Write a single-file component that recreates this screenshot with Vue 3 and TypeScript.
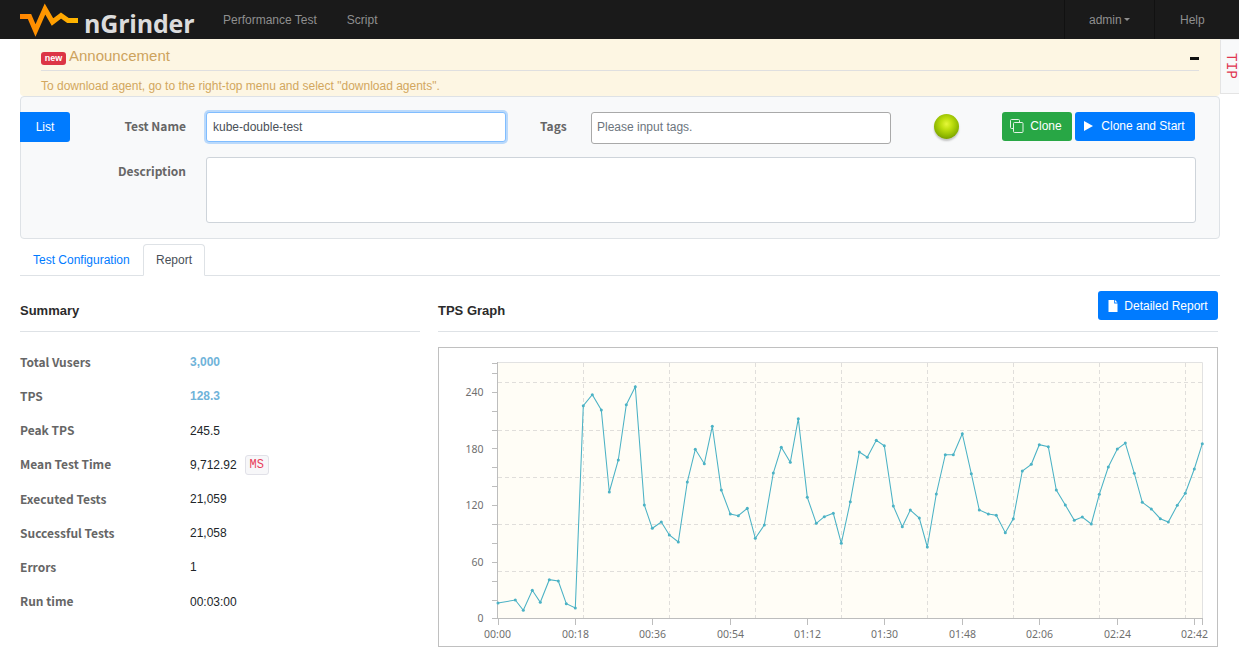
<script setup lang="ts">
const points: [number, number][] = [
  [498,603],[515.3,600],[523.3,610.3],[532.3,590.3],[540.3,602.3],[549.3,579.7],[558.3,581],[566.3,603.7],[575.3,608],
  [583.3,405.7],[592.3,394.7],[601.3,410],[609.3,492],[618.3,460],[626.3,404.7],[635.3,386.7],[644.3,505],[652.3,528.3],
  [661.3,522],[669.3,535],[678.3,542],[687.3,482],[695.3,449.3],[704.3,463.7],[712.3,426.3],[721.3,490],[730.3,514],
  [738.3,515.7],[747.3,508.3],[755.3,538.3],[764.3,525],[773.3,473],[781.3,447.3],[790.3,462.3],[798.3,418.7],[807.3,497.3],
  [816.3,523.3],[824.3,516.7],[833.3,513.3],[841.3,543.3],[850.3,501.7],[859.3,452],[867.3,457.3],[876.3,440.3],[884.3,445.7],
  [893.3,506],[902.3,526.7],[910.3,510],[919.3,518],[927.3,547],[936.3,494],[945.3,454.7],[953.3,454.7],[962.3,433.7],
  [971.3,473.7],[979.3,510],[988.3,514],[996.3,515.3],[1005.3,532.7],[1013.3,518.7],[1022.3,471],[1031.3,464.3],[1039.3,444.7],
  [1048.3,446.7],[1056.3,490],[1065.3,505],[1074.3,520.3],[1082.3,517],[1091.3,524],[1099.3,494.3],[1108.3,467],[1117.3,449],
  [1125.3,443],[1134.3,473.3],[1142.3,502.3],[1151.3,509],[1160.3,518.7],[1168.3,522],[1177.3,505.3],[1185.3,493.3],[1194.3,469],[1202.3,443.7]
]
const linePoints = points.map(p => p.join(',')).join(' ')
const gridH = [382.5, 430.5, 477.5, 524.5, 571.5]
const gridV = [583.5, 669.5, 755.5, 841.5, 927.5, 1013.5, 1099.5, 1185.5]
const yTicks = [363.5, 373.5, 392.5, 411.5, 430.5, 448.5, 467.5, 486.5, 505.5, 524.5, 543.5, 562.5, 581.5, 600.5, 618.5]
const yLabels = [
  { t: '240', y: 396 }, { t: '180', y: 453 }, { t: '120', y: 509 }, { t: '60', y: 566 }, { t: '0', y: 622 }
]
const xTicks = [498.5, 575.5, 652.5, 730.5, 807.5, 884.5, 962.5, 1039.5, 1117.5, 1194.5, 1202.5]
const xLabels = [
  { t: '00:00', x: 497.5 }, { t: '00:18', x: 575.5 }, { t: '00:36', x: 652.5 }, { t: '00:54', x: 730.5 },
  { t: '01:12', x: 807.5 }, { t: '01:30', x: 884.5 }, { t: '01:48', x: 962.5 }, { t: '02:06', x: 1039.5 },
  { t: '02:24', x: 1117.5 }, { t: '02:42', x: 1194.5 }
]
const rows = [
  { label: 'Total Vusers', value: '3,000', hi: true },
  { label: 'TPS', value: '128.3', hi: true },
  { label: 'Peak TPS', value: '245.5' },
  { label: 'Mean Test Time', value: '9,712.92', unit: 'MS' },
  { label: 'Executed Tests', value: '21,059' },
  { label: 'Successful Tests', value: '21,058' },
  { label: 'Errors', value: '1' },
  { label: 'Run time', value: '00:03:00' }
]
</script>

<template>
  <div class="page">
    <header class="navbar">
      <a class="brand">
        <svg class="logo" width="60" height="39" viewBox="20 0 60 39">
          <defs>
            <linearGradient id="pulse" x1="0" y1="0" x2="1" y2="0">
              <stop offset="0" stop-color="#ff8400" />
              <stop offset="0.5" stop-color="#ff9a00" />
              <stop offset="1" stop-color="#ffb800" />
            </linearGradient>
          </defs>
          <polyline points="20,16.5 29.5,16.5 35.5,30.5 45,9 52.5,22 61,15.5 68,20.5 78,20.5" fill="none" stroke="url(#pulse)" stroke-width="5" stroke-linejoin="miter" />
        </svg>
        <span class="brand-text">nGrinder</span>
      </a>
      <nav class="nav-left">
        <span>Performance Test</span>
        <span>Script</span>
      </nav>
      <nav class="nav-right">
        <span class="nav-cell admin">admin<i class="caret"></i></span>
        <span class="nav-cell help">Help</span>
      </nav>
    </header>

    <div class="notice-row">
      <section class="notice">
        <div class="notice-head">
          <span class="badge">new</span>
          <span class="notice-title">Announcement</span>
          <span class="minus"></span>
        </div>
        <p class="notice-body">To download agent, go to the right-top menu and select "download agents".</p>
      </section>
      <aside class="tip"><span>TIP</span></aside>
    </div>

    <section class="panel">
      <div class="form-row first">
        <button class="btn blue list">List</button>
        <label class="lbl name-lbl">Test Name</label>
        <input class="input name" value="kube-double-test" />
        <label class="lbl tags-lbl">Tags</label>
        <input class="input tags" placeholder="Please input tags." />
        <span class="ball"></span>
        <button class="btn green clone">
          <svg width="14" height="14" viewBox="0 0 14 14" fill="none" stroke="#e4f3e7" stroke-width="1">
            <path d="M9.5 3.5V1.5a1 1 0 0 0-1-1H1.5a1 1 0 0 0-1 1v7a1 1 0 0 0 1 1h2" />
            <rect x="3.5" y="3.5" width="9.5" height="10" rx="1" />
          </svg>
          Clone
        </button>
        <button class="btn blue start">
          <svg width="11" height="12" viewBox="0 0 11 12"><path d="M1 1v10l9-5z" fill="#fff" /></svg>
          Clone and Start
        </button>
      </div>
      <div class="form-row second">
        <label class="lbl desc-lbl">Description</label>
        <textarea class="input desc"></textarea>
      </div>
    </section>

    <div class="tabs">
      <a class="tab link">Test Configuration</a>
      <a class="tab active">Report</a>
    </div>

    <main class="report">
      <section class="summary">
        <h4 class="section-head"><span>Summary</span></h4>
        <dl class="stats">
          <div v-for="r in rows" :key="r.label" class="stat">
            <dt>{{ r.label }}</dt>
            <dd :class="{ hi: r.hi }">
              {{ r.value }}<code v-if="r.unit" class="unit">{{ r.unit }}</code>
            </dd>
          </div>
        </dl>
      </section>
      <section class="graph">
        <h4 class="section-head">
          <span>TPS Graph</span>
          <button class="btn blue detail">
            <svg width="10" height="12" viewBox="0 0 10 12"><path d="M0.5 0h5.7v3.4h3.3V12H0.5z M7 0l2.5 2.6H7z" fill="#fff" /></svg>
            Detailed Report
          </button>
        </h4>
        <div class="chart">
          <svg width="778" height="298" viewBox="439 348 778 298">
            <rect x="498" y="362.5" width="704.5" height="256" fill="#fffdf6" />
            <path d="M498 362.5H1202.5V618" fill="none" stroke="#e2e2e2" />
            <g stroke="#e0dedb" stroke-dasharray="4 3" fill="none">
              <line v-for="y in gridH" :key="'h' + y" x1="498" :y1="y" x2="1202" :y2="y" />
              <line v-for="x in gridV" :key="'v' + x" :x1="x" y1="363" :x2="x" y2="618" />
            </g>
            <g stroke="#bdbdbd" fill="none">
              <line x1="497.5" y1="362" x2="497.5" y2="619" />
              <line x1="498" y1="618.5" x2="1203" y2="618.5" />
              <line v-for="y in yTicks" :key="'yt' + y" x1="492" :y1="y" x2="497" :y2="y" />
              <line v-for="x in xTicks" :key="'xt' + x" :x1="x" y1="619" :x2="x" y2="625" />
            </g>
            <polyline :points="linePoints" fill="none" stroke="#4bb2c5" stroke-width="1.05" />
            <circle v-for="(p, i) in points" :key="i" :cx="p[0]" :cy="p[1]" r="1.5" fill="#4bb2c5" />
            <g class="axis-text">
              <text v-for="l in yLabels" :key="l.t" x="483.5" :y="l.y" text-anchor="end">{{ l.t }}</text>
              <text v-for="l in xLabels" :key="l.t" :x="l.x" y="638" text-anchor="middle">{{ l.t }}</text>
            </g>
          </svg>
        </div>
      </section>
    </main>
  </div>
</template>

<style>
html, body { margin: 0; overflow: hidden; background: #fff; }
</style>

<style scoped>
.page {
  width: 1239px;
  height: 654px;
  overflow: hidden;
  font-family: "Liberation Sans", Arial, sans-serif;
  font-size: 12px;
  color: #212529;
}
.navbar {
  height: 39px;
  background: #1a1a1a;
  display: flex;
  align-items: stretch;
  padding-left: 20px;
}
.brand { display: flex; align-items: flex-start; width: 203px; }
.logo { display: block; flex: none; }
.brand-text {
  font-family: "Open Sans", sans-serif;
  font-weight: 700;
  font-size: 25px;
  letter-spacing: -0.2px;
  line-height: 39px;
  margin-left: 4px;
  margin-top: 4px;
  color: #dcdcdc;
  height: 35px;
}
.nav-left {
  display: flex;
  gap: 30px;
  align-items: center;
  color: #8f8f8f;
}
.nav-right {
  margin-left: auto;
  display: flex;
  color: #8f8f8f;
}
.nav-cell {
  display: flex;
  align-items: center;
  border-left: 1px solid #111;
}
.admin { width: 90px; padding-left: 24px; box-sizing: border-box; }
.help { width: 85px; padding-left: 25px; box-sizing: border-box; }
.caret {
  display: inline-block;
  margin-left: 2px;
  border-top: 3px solid #8f8f8f;
  border-left: 3px solid transparent;
  border-right: 3px solid transparent;
}
.notice-row { display: flex; padding-left: 20px; height: 57px; }
.notice {
  width: 1200px;
  box-sizing: border-box;
  background: #fdf6e3;
  border-radius: 0 0 4px 4px;
  padding: 0 21px;
  color: #d2a75e;
}
.notice-head {
  display: flex;
  align-items: center;
  height: 32px;
  border-bottom: 1px solid #dfdfe0;
  padding-top: 2px;
  box-sizing: border-box;
  width: 1158px;
}
.badge {
  background: #dc3545;
  color: #fff;
  font-weight: 700;
  font-size: 9px;
  line-height: 13px;
  height: 13px;
  width: 25px;
  text-align: center;
  border-radius: 3px;
  margin-top: 6px;
}
.notice-title { font-size: 15px; color: #cda35d; margin-left: 3px; }
.minus {
  margin-left: auto;
  width: 9px;
  height: 3px;
  background: #111;
  margin-top: 6px;
}
.notice-body { margin: 8px 0 0; line-height: 14px; white-space: nowrap; }
.tip {
  width: 19px;
  height: 55px;
  box-sizing: border-box;
  background: #f8f9fa;
  border: 1px solid #e4e4e4;
  border-right: 0;
  display: flex;
  justify-content: center;
  padding-top: 13px;
}
.tip span {
  writing-mode: vertical-rl;
  font-family: "Liberation Mono", monospace;
  font-size: 14.4px;
  line-height: 13px;
  color: #e0354f;
}
.panel {
  margin-left: 20px;
  width: 1200px;
  height: 143px;
  box-sizing: border-box;
  background: #f8f9fa;
  border: 1px solid #dee2e6;
  border-radius: 4px;
}
.form-row { display: flex; }
.first { margin-top: 15px; height: 32px; }
.second { margin-top: 13px; }
.btn {
  display: inline-flex;
  align-items: center;
  justify-content: center;
  gap: 6px;
  border: 0;
  border-radius: 3px;
  color: #fff;
  font: 12px "Liberation Sans", Arial, sans-serif;
  height: 29px;
  padding: 0;
}
.blue { background: #007bff; }
.green { background: #28a745; }
.list { width: 50px; height: 30px; margin-left: -1px; border-radius: 0 3px 3px 0; }
.lbl {
  font-family: "Noto Sans CJK KR", "Noto Sans", sans-serif;
  font-weight: 700;
  font-size: 12px;
  color: #666;
  text-align: right;
  line-height: 27px;
}
.name-lbl { width: 116px; margin-right: 20px; }
.tags-lbl { margin-left: 34px; width: 51px; text-align: left; }
.desc-lbl { width: 165px; margin-right: 20px; }
.input {
  box-sizing: border-box;
  font: 12px "Liberation Sans", Arial, sans-serif;
  color: #495057;
  background: #fff;
  border-radius: 3px;
  outline: none;
  padding: 0 6px;
  display: block;
  margin: 0;
}
.name {
  width: 300px;
  height: 30px;
  border: 1px solid #80bdff;
  box-shadow: 0 0 0 2px rgba(0, 123, 255, 0.25);
}
.tags {
  width: 300px;
  height: 32px;
  border: 1px solid #a9a9a9;
  padding: 0 5px 2px;
}
.tags::placeholder { color: #6c757d; opacity: 1; }
.desc {
  width: 990px;
  height: 66px;
  border: 1px solid #ced4da;
  resize: none;
}
.ball {
  width: 25px;
  height: 25px;
  margin: 2px 0 0 43px;
  border-radius: 50%;
  background: radial-gradient(circle at 50% 40%, #e6f73a 0, #c0e010 28%, #8fb800 62%, #6a8a08 88%, #8a9a50 100%);
  box-shadow: 0 2px 2px rgba(0, 0, 0, 0.22);
}
.clone { width: 70px; margin-left: 43px; padding: 0 2px 2px 0; }
.start { width: 120px; margin-left: 3px; gap: 7px; padding: 0 2px 2px 0; }
.tabs {
  margin: 5px 0 0 20px;
  width: 1200px;
  height: 32px;
  box-sizing: border-box;
  border-bottom: 1px solid #dee2e6;
  display: flex;
}
.tab {
  box-sizing: border-box;
  height: 32px;
  line-height: 30px;
  padding: 0 12px;
  border: 1px solid transparent;
}
.link { color: #007bff; width: 123px; }
.active {
  color: #495057;
  background: #fff;
  border-color: #dee2e6 #dee2e6 #fff;
  border-radius: 4px 4px 0 0;
}
.report { display: flex; margin-left: 20px; gap: 18px; }
.summary { width: 400px; }
.graph { width: 780px; }
.section-head {
  margin: 0;
  height: 56px;
  padding-top: 15px;
  box-sizing: border-box;
  border-bottom: 1px solid #dee2e6;
  display: flex;
  justify-content: space-between;
  align-items: flex-start;
  font-size: 13px;
  font-weight: 700;
  color: #2b2b2b;
}
.section-head span { line-height: 39px; }
.detail { width: 120px; }
.stats { margin: 13.2px 0 0; }
.stat { display: flex; height: 34.2px; align-items: center; }
.stat dt {
  width: 170px;
  font-family: "Noto Sans CJK KR", "Noto Sans", sans-serif;
  font-weight: 700;
  font-size: 12px;
  color: #666;
  padding-bottom: 2px;
}
.stat dd { margin: 0; display: flex; align-items: center; color: #212529; }
.stat dd.hi { color: #6fb3d9; font-weight: 700; }
.unit {
  margin-left: 8px;
  font-family: "Liberation Mono", monospace;
  font-size: 12px;
  color: #e83e5c;
  background: #f7f7f9;
  border: 1px solid #e1e1e8;
  border-radius: 3px;
  width: 24px;
  height: 20px;
  line-height: 18px;
  text-align: center;
  box-sizing: border-box;
}
.chart {
  margin-top: 15px;
  width: 780px;
  height: 300px;
  box-sizing: border-box;
  border: 1px solid #c0c0c0;
}
.chart svg { display: block; }
.axis-text text {
  font-family: "Noto Sans", sans-serif;
  font-size: 10.5px;
  fill: #6f6f6f;
}
</style>
